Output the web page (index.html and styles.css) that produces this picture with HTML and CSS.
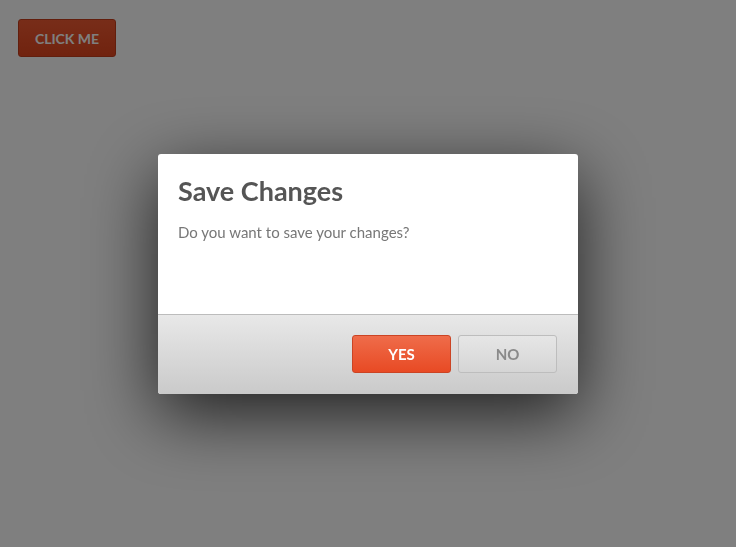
FILE: index.html
```html
<!DOCTYPE html>
<html lang="en">
<head>
  <meta charset="UTF-8">
  <meta name="viewport" content="width=device-width, initial-scale=1.0">
  <title>Save Changes</title>
  <link rel="stylesheet" href="styles.css">
</head>
<body>
  <button class="open-button">Click me</button>

  <!-- Modal Structure -->
  <div class="modal">
    <div class="modal-content">
      <div class="modal-body">
        <h2>Save Changes</h2>
        <p>Do you want to save your changes?</p>
      </div>
      <div class="modal-footer">
        <button class="btn btn-yes">Yes</button>
        <button class="btn btn-no">No</button>
      </div>
    </div>
  </div>
</body>
</html>
```

FILE: styles.css
```css
body {
  font-family: Lato, "Open Sans", sans-serif;
  margin: 0;
  padding: 19px 18px;
  background-color: #fff;
  height: 547px;
  box-sizing: border-box;
}

.open-button {
  width: 98px;
  height: 38px;
  font-family: inherit;
  font-size: 14px;
  font-weight: bold;
  text-transform: uppercase;
  color: #fff;
  background: linear-gradient(#f05a32, #e2461e);
  border: 1px solid #c53c1a;
  border-radius: 3px;
  cursor: pointer;
}

/* Modal Background */
.modal {
  position: fixed;
  left: 0;
  top: 0;
  width: 100%;
  height: 100%;
  z-index: 1000;
  display: flex;
  justify-content: center;
  align-items: center;
  background-color: rgba(0, 0, 0, 0.5);
}

/* Modal Content */
.modal-content {
  width: 420px;
  background-color: #fff;
  border-radius: 3px;
  overflow: hidden;
  box-shadow: 0 20px 70px rgba(0, 0, 0, 0.75);
}

.modal-body {
  height: 160px;
  padding: 20px;
  box-sizing: border-box;
}

.modal-body h2 {
  margin: 0;
  padding-top: 1px;
  font-size: 27px;
  font-weight: bold;
  line-height: 32px;
  color: #555;
}

.modal-body p {
  margin: 16px 0 0;
  font-size: 15px;
  color: #777;
}

.modal-footer {
  height: 80px;
  box-sizing: border-box;
  border-top: 1px solid #bcbcbc;
  background: linear-gradient(#e8e8e8, #cacaca);
  display: flex;
  justify-content: flex-end;
  align-items: center;
  gap: 7px;
  padding: 0 21px 0 20px;
}

.btn {
  width: 99px;
  height: 38px;
  font-family: inherit;
  font-size: 15px;
  font-weight: bold;
  text-transform: uppercase;
  border-radius: 3px;
  cursor: pointer;
}

.btn-yes {
  color: #fff;
  background: linear-gradient(#ef6c4a, #e84a24);
  border: 1px solid #cb4424;
}

.btn-no {
  color: #8a8a8a;
  background: linear-gradient(#e6e6e6, #d5d5d5);
  border: 1px solid #bdbdbd;
}
```
